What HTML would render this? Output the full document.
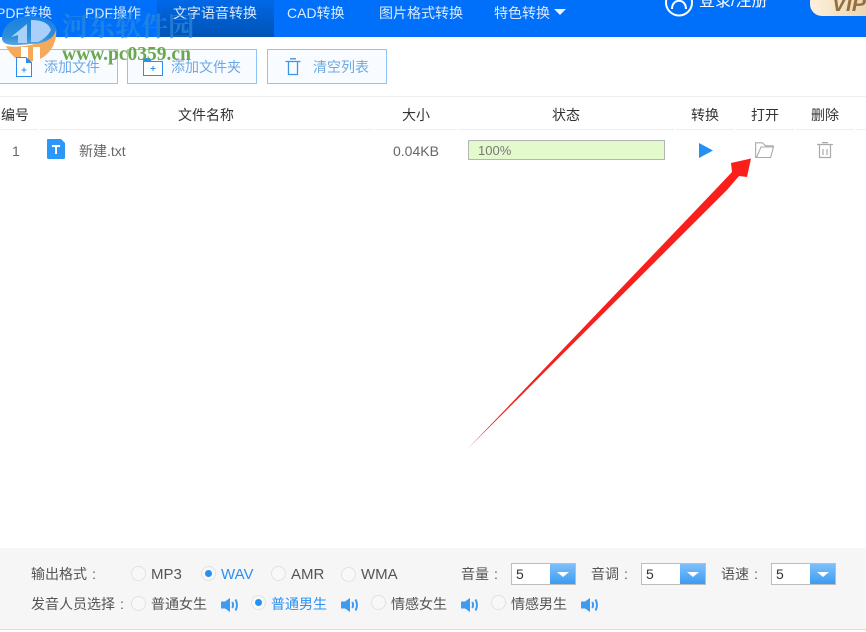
<!DOCTYPE html>
<html><head><meta charset="utf-8">
<style>
html,body{margin:0;padding:0}
body{width:866px;height:632px;overflow:hidden;background:#fff;position:relative;font-family:"Liberation Sans","Noto Sans CJK SC",sans-serif;font-size:13px;color:#555}
.a{position:absolute;white-space:nowrap;line-height:18px}
.top{position:absolute;left:0;top:0;width:866px;height:37px;background:#0070fb}
.tab{color:#dbe9ff;font-size:14px;top:4px}
.btn{position:absolute;top:49px;height:35px;box-sizing:border-box;border:1px solid #8fc6f5;background:#f8fbff}
.bt{color:#6aa9e4;font-size:14px;top:58px}
.h{color:#333;font-size:14px;top:106px}
.ln{position:absolute;height:1px;background:#eee}
.r{position:absolute;width:13px;height:13px;border:1px solid #e2e2e2;border-radius:50%;background:#f8f8f8}
.r.on:after{content:"";position:absolute;left:3px;top:3px;width:7px;height:7px;border-radius:50%;background:#2490f2}
.f{color:#555;font-size:14px}
.l{font-size:15px}
.c{display:inline-block;width:14px;text-align:center}
.b{color:#2b90f0}
.sel{position:absolute;top:563px;width:65px;height:22px;box-sizing:border-box;border:1px solid #bdbdbd;background:#fff;color:#333;font-size:14px;line-height:21px;padding-left:4px}
.sel i{position:absolute;right:0;top:0;width:25px;height:20px;background:linear-gradient(#7fc0fa,#3b9cf2)}
.sel i:after{content:"";position:absolute;left:7px;top:8px;border-left:6px solid transparent;border-right:6px solid transparent;border-top:5px solid #fff}
svg{position:absolute;overflow:visible}
</style></head><body>
<div class="top"></div>
<div style="position:absolute;left:157px;top:0;width:117px;height:37px;background:linear-gradient(#0068e8,#0053b4)"></div>
<div class="a tab" style="left:-4px;top:4px">PDF转换</div>
<div class="a tab" style="left:85px">PDF操作</div>
<div class="a tab" style="left:173px">文字语音转换</div>
<div class="a tab" style="left:287px">CAD转换</div>
<div class="a tab" style="left:379px">图片格式转换</div>
<div class="a tab" style="left:494px">特色转换</div>
<svg style="left:554px;top:9px" width="12" height="8"><path d="M0 0H12L6 6Z" fill="#e8f1ff"/></svg>
<svg style="left:665px;top:-11px" width="30" height="30"><circle cx="14" cy="13.500" r="13" fill="none" stroke="#fff" stroke-width="2"/><path d="M7 20C7 9 21 9 21 20" fill="none" stroke="#fff" stroke-width="2"/></svg>
<div class="a" style="left:699px;top:-7px;color:#fff;font-size:16px">登录/注册</div>
<div style="position:absolute;left:810px;top:-10px;width:70px;height:26px;border-radius:12px;background:linear-gradient(90deg,#fdf0dc,#e9cfa6)"></div>
<div class="a" style="left:832px;top:-7px;color:#94703e;font-size:21px;font-weight:bold;line-height:24px;font-style:italic">VIP</div>

<div class="btn" style="left:-10px;width:128px"></div>
<div class="btn" style="left:127px;width:130px"></div>
<div class="btn" style="left:267px;width:120px"></div>
<div class="a bt" style="left:44px">添加文件</div>
<div class="a bt" style="left:171px">添加文件夹</div>
<div class="a bt" style="left:313px">清空列表</div>

<div class="ln" style="left:0;top:96px;width:866px"></div>
<div class="ln" style="left:0;top:129px;width:38px"></div>
<div class="ln" style="left:40px;top:129px;width:333px"></div>
<div class="ln" style="left:375px;top:129px;width:82px"></div>
<div class="ln" style="left:459px;top:129px;width:215px"></div>
<div class="ln" style="left:676px;top:129px;width:58px"></div>
<div class="ln" style="left:736px;top:129px;width:58px"></div>
<div class="ln" style="left:796px;top:129px;width:58px"></div>
<div class="ln" style="left:856px;top:129px;width:10px"></div>
<div class="a h" style="left:1px">编号</div>
<div class="a h" style="left:178px">文件名称</div>
<div class="a h" style="left:402px">大小</div>
<div class="a h" style="left:552px">状态</div>
<div class="a h" style="left:691px">转换</div>
<div class="a h" style="left:751px">打开</div>
<div class="a h" style="left:811px">删除</div>

<div class="a" style="left:12px;top:142px;font-size:14px;color:#666">1</div>
<svg style="left:47px;top:139px" width="18" height="20"><path d="M1 0H14L18 4V18.500Q18 20 16.500 20H1.500Q0 20 0 18.500V1Q0 0 1 0Z" fill="#2b97f8"/><path d="M5 6H13V8H10V15H8V8H5Z" fill="#fff"/></svg>
<div class="a" style="left:79px;top:142px;font-size:14px;color:#666">新建.txt</div>
<div class="a" style="left:393px;top:142px;font-size:14px;color:#666">0.04KB</div>
<div style="position:absolute;left:468px;top:140px;width:197px;height:20px;box-sizing:border-box;border:1px solid #b4b4b4;background:#e3facc"></div>
<div class="a" style="left:478px;top:142px;font-size:13px;color:#777">100%</div>
<svg style="left:699px;top:143px" width="14" height="15"><path d="M0 0L14 7.500L0 15Z" fill="#2490f2"/></svg>
<svg style="left:755px;top:142px" width="20" height="17" fill="none" stroke="#aaa" stroke-width="1.100"><path d="M1.500 15.500H.6V.8H7.500L10.500 3.800H18V5"/><path d="M1.500 15.500H15.500L18.500 5H6Z"/></svg>
<svg style="left:817px;top:142px" width="16" height="16" fill="none" stroke="#aaa" stroke-width="1.200"><path d="M0 2.500H16M5 .6H11"/><path d="M2.500 3V15.500H13.500V3M6 7V13M10 7V13"/></svg>

<svg style="left:0;top:0" width="866" height="632"><path d="M467.500 449L715 190L732 172L731 163L751 158.500L747 177L739 176L727 190Z" fill="#fb1f1c"/></svg>

<div style="position:absolute;left:0;top:548px;width:866px;height:81px;background:#f6f6f6;border-bottom:1px solid #ddd"></div>
<div class="a f" style="left:31px;top:565px">输出格式<span class="c">:</span></div>
<div class="r" style="left:131px;top:566px"></div><div class="a f l" style="left:151px;top:566px">MP3</div>
<div class="r on" style="left:201px;top:566px"></div><div class="a f l b" style="left:221px;top:566px">WAV</div>
<div class="r" style="left:271px;top:566px"></div><div class="a f l" style="left:291px;top:566px">AMR</div>
<div class="r" style="left:341px;top:567px"></div><div class="a f l" style="left:361px;top:566px">WMA</div>
<div class="a f" style="left:461px;top:565px">音量<span class="c">:</span></div>
<div class="sel" style="left:511px">5<i></i></div>
<div class="a f" style="left:591px;top:565px">音调<span class="c">:</span></div>
<div class="sel" style="left:641px">5<i></i></div>
<div class="a f" style="left:721px;top:565px">语速<span class="c">:</span></div>
<div class="sel" style="left:771px">5<i></i></div>

<div class="a f" style="left:31px;top:595px">发音人员选择<span class="c">:</span></div>
<div class="r" style="left:131px;top:596px"></div><div class="a f" style="left:151px;top:595px">普通女生</div>
<svg style="left:221px;top:598px" width="18" height="14"><use href="#sp"/></svg>
<div class="r on" style="left:251px;top:595px"></div><div class="a f b" style="left:271px;top:595px">普通男生</div>
<svg style="left:341px;top:598px" width="18" height="14"><use href="#sp"/></svg>
<div class="r" style="left:371px;top:595px"></div><div class="a f" style="left:391px;top:595px">情感女生</div>
<svg style="left:461px;top:598px" width="18" height="14"><use href="#sp"/></svg>
<div class="r" style="left:491px;top:595px"></div><div class="a f" style="left:511px;top:595px">情感男生</div>
<svg style="left:581px;top:598px" width="18" height="14"><use href="#sp"/></svg>
<svg width="0" height="0" style="left:0;top:0"><defs><g id="sp"><path d="M0 3.500H4L9 0V14L4 10.500H0Z" fill="#3d9bf0"/><path d="M11.200 4Q13 7 11.200 10" fill="none" stroke="#3d9bf0" stroke-width="2"/><path d="M14.500 1.500Q17.500 7 14.500 12.500" fill="none" stroke="#3d9bf0" stroke-width="2"/></g></defs></svg>

<!-- watermark -->
<svg style="left:0;top:0" width="60" height="65">
<defs><linearGradient id="lg" gradientUnits="userSpaceOnUse" x1="0" y1="16" x2="0" y2="46"><stop offset="0" stop-color="#1680e2"/><stop offset=".7" stop-color="#2e8ed9"/><stop offset="1" stop-color="#62aae6"/></linearGradient></defs>
<path d="M56 28C58 44 48 58 34 61H20C14 58 9 52 6 46C16 48 40 46 50 36Z" fill="#f5a95a"/>
<path d="M21 47H28V62H21ZM33 47H40V62H33Z" fill="#fff"/>
<path d="M2 38C2 24 16 16 30 16C44 16 56 22 56 30C54 38 46 44 30 44C14 46 2 46 2 38Z" fill="url(#lg)"/>
<path d="M11 37L27 24V43H18V35Z" fill="#a8d2fa"/>
<path d="M31 20Q48 20 51 30Q47 38 38 42H31Z" fill="#a9d0fb"/>
</svg>
<svg style="left:16px;top:57px" width="17" height="21"><path d="M.5 .5H10L15.500 5.500V19.500H.5Z" fill="#fff" stroke="#2a8ff0"/><path d="M10 0L16 6H10Z" fill="#2a8ff0"/><path d="M5.500 13H10.500M8 10.500V15.500" stroke="#2a8ff0"/></svg>
<svg style="left:143px;top:57px" width="21" height="20"><path d="M.5 4.500H19.500V18.500H.5Z" fill="#fff" stroke="#2a8ff0"/><path d="M0 1H7L9 5H0Z" fill="#2a8ff0"/><path d="M7.500 11.500H12.500M10 9V14" stroke="#2a8ff0"/></svg>
<svg style="left:285px;top:58px" width="17" height="18"><path d="M.5 3.500H15.500M5 .8H11" stroke="#3b96ea" stroke-width="1.300"/><path d="M3.500 4V16.500H12.500V4" fill="none" stroke="#3b96ea" stroke-width="1.300"/></svg>
<div class="a" style="left:62px;top:11px;font-family:'Noto Serif CJK SC','Liberation Serif',serif;font-size:26.500px;line-height:28px;font-weight:bold;color:#2e8bd8;opacity:.7">河东软件园</div>
<div class="a" style="left:62px;top:46px;font-family:'Liberation Serif',serif;font-size:19.500px;font-weight:bold;color:#6aa84f;line-height:18px">www.pc0359.cn</div>
</body></html>
